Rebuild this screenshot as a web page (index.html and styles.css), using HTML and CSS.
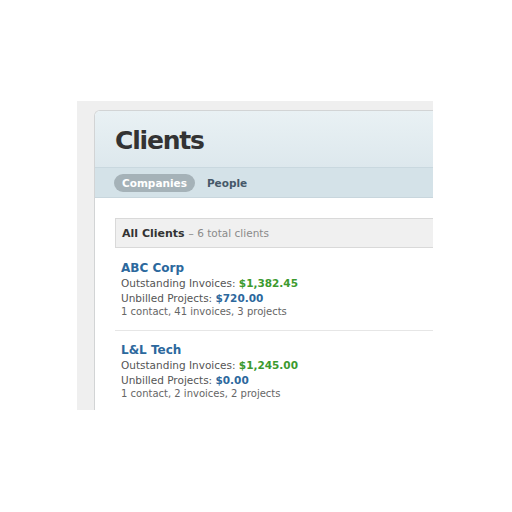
FILE: index.html
```html
<!DOCTYPE html>
<html lang="en">
<head>
  <meta charset="UTF-8" />
  <title>Clients</title>
  <link rel="stylesheet" href="styles.css">
</head>
<body>
  <div class="shot">
    <div class="panel">
      <div class="panel-head">
        <h1>Clients</h1>
      </div>
      <div class="tabs">
        <span class="tab active">Companies</span>
        <span class="tab">People</span>
      </div>

      <div class="content">
        <div class="list-head">
          <strong>All Clients</strong> <span class="count">&ndash; 6 total clients</span>
        </div>

        <div class="client">
          <a class="client-name">ABC Corp</a>
          <div class="line">Outstanding Invoices: <b class="green">$1,382.45</b></div>
          <div class="line">Unbilled Projects: <b class="blue">$720.00</b></div>
          <div class="meta">1 contact, 41 invoices, 3 projects</div>
        </div>

        <div class="client">
          <a class="client-name">L&amp;L Tech</a>
          <div class="line">Outstanding Invoices: <b class="green">$1,245.00</b></div>
          <div class="line">Unbilled Projects: <b class="blue">$0.00</b></div>
          <div class="meta">1 contact, 2 invoices, 2 projects</div>
        </div>
      </div>
    </div>
  </div>
</body>
</html>
```

FILE: styles.css
```css
* {
  box-sizing: border-box;
  font-family: 'DejaVu Sans', Verdana, sans-serif;
}

body {
  margin: 0;
  background: #fff;
}

.shot {
  margin: 101px 0 0 77px;
  width: 356px;
  height: 309px;
  overflow: hidden;
  background: #efefef;
  padding: 9px 0 0 17px;
}

.panel {
  width: 400px;
  height: 320px;
  background: #fff;
  border: 1px solid #d2d4d5;
  border-right: none;
  border-radius: 6px 0 0 0;
  overflow: hidden;
}

.panel-head {
  height: 57px;
  background: linear-gradient(#e9f1f4, #dde8ed);
  border-bottom: 1px solid #c9d8df;
  padding: 14px 0 0 20px;
}

h1 {
  margin: 0;
  font-size: 25px;
  font-weight: bold;
  letter-spacing: -1.2px;
  color: #333;
  line-height: 32px;
}

.tabs {
  height: 30px;
  background: #d4e2e8;
  border-bottom: 1px solid #c8d6dd;
  display: flex;
  align-items: center;
  gap: 4px;
  padding-left: 19px;
}

.tab {
  font-size: 10.5px;
  font-weight: bold;
  color: #46596a;
  padding: 3px 8px;
  border-radius: 9px;
}

.tab.active {
  background: #a5b2b8;
  color: #fff;
}

.content {
  padding: 20px 0 0 20px;
}

.list-head {
  height: 30px;
  margin-bottom: 1px;
  background: #f0f0f0;
  border: 1px solid #d9d9d9;
  border-right: none;
  padding-left: 6px;
  display: flex;
  align-items: center;
  gap: 4px;
  font-size: 11px;
  color: #333;
}

.list-head .count {
  color: #8a8a8a;
  font-size: 10.5px;
}

.client {
  padding: 12px 0 11px 6px;
  border-bottom: 1px solid #e6e6e6;
  font-size: 10.5px;
  color: #555;
  line-height: 14.5px;
}

.client:last-child {
  border-bottom: none;
}

.client-name {
  display: block;
  font-size: 12px;
  font-weight: bold;
  color: #2c689d;
  line-height: 15px;
}

.green {
  color: #3c9a2f;
}

.blue {
  color: #2c689d;
}

.meta {
  font-size: 10px;
  color: #666;
  line-height: 14px;
}
```
